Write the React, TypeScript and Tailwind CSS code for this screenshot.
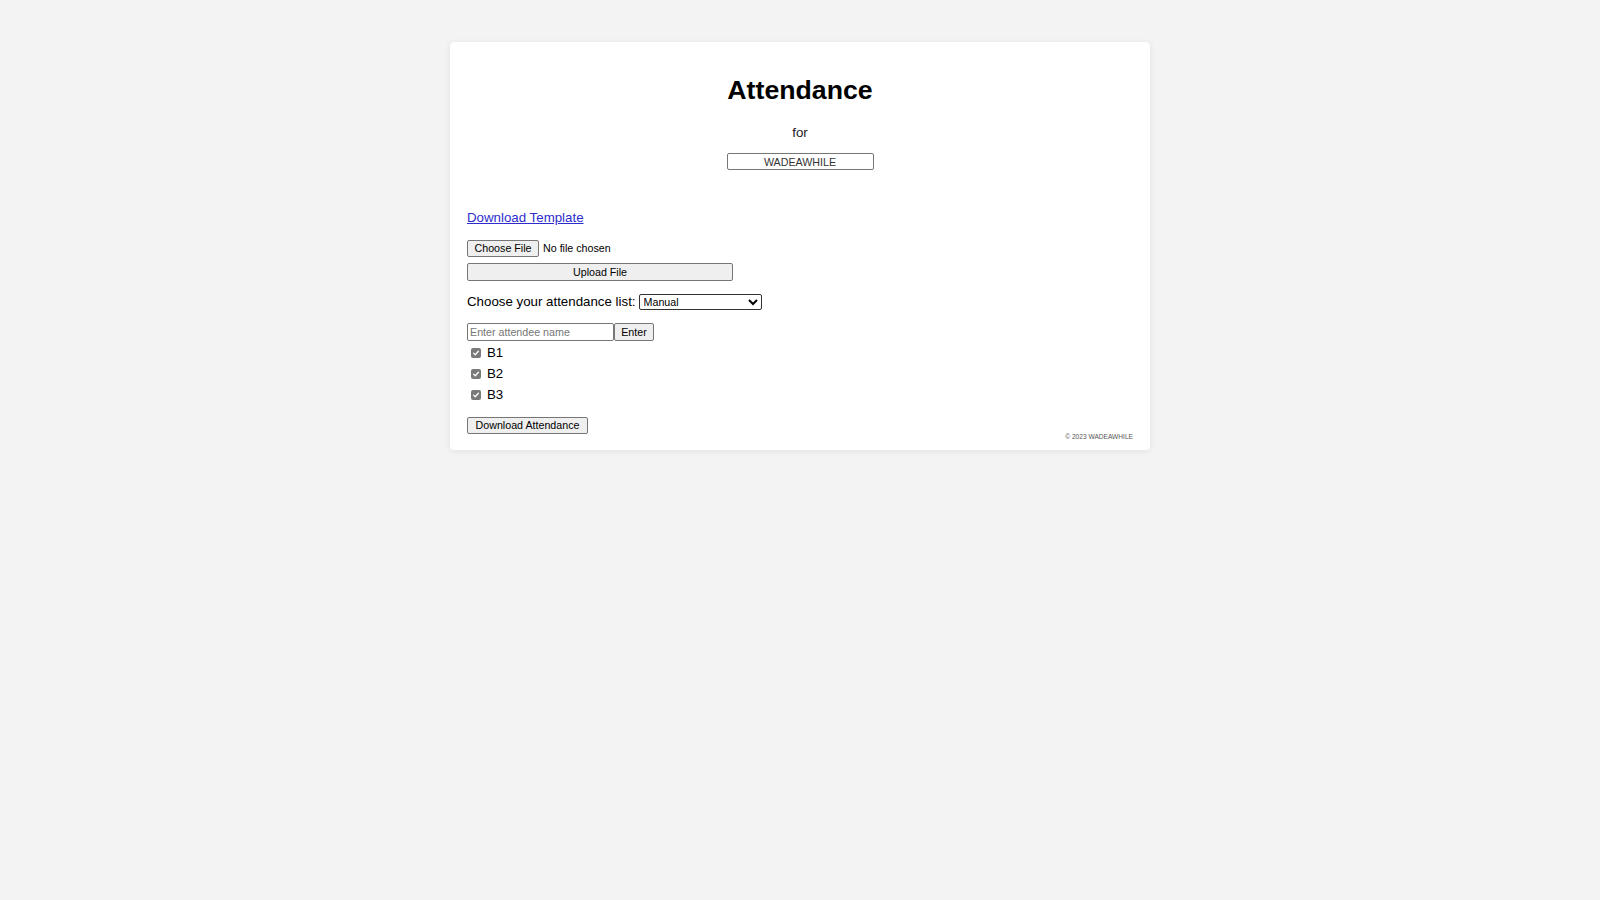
import React, { useState } from 'react';

const Check: React.FC = () => (
  <span className="flex h-[10px] w-[10px] items-center justify-center rounded-[2px] bg-[#7a7a7a]">
    <svg viewBox="0 0 10 10" className="h-[8px] w-[8px]">
      <path d="M2 5.2 L4.1 7.2 L8 2.8" fill="none" stroke="#fff" strokeWidth="1.6" strokeLinecap="round" strokeLinejoin="round" />
    </svg>
  </span>
);

const btn =
  'flex items-center justify-center rounded-[2px] border border-[#767676] bg-[#efefef] text-[10.7px] text-black leading-none';

const App: React.FC = () => {
  const [name, setName] = useState('');
  const attendees = ['B1', 'B2', 'B3'];

  return (
    <div className="min-h-screen bg-[#f3f3f3] pt-[42px] font-['Liberation_Sans',Arial,sans-serif] text-black">
      <div className="mx-auto w-[700px] rounded-[4px] bg-white px-[17px] pt-[17px] pb-[9px] shadow-[0_1px_6px_rgba(0,0,0,0.08)]">
        <h1 className="mt-[16px] text-center text-[26.7px] font-bold leading-[30px]">Attendance</h1>
        <p className="mt-[20px] text-center text-[13.3px] leading-[15px] text-[#222]">for</p>
        <div className="mt-[13px] flex justify-center">
          <input
            readOnly
            value="WADEAWHILE"
            className="h-[17px] w-[147px] rounded-[2px] border border-[#767676] bg-white text-center text-[10.7px] text-[#333] outline-none"
          />
        </div>

        <div className="mt-[40px] text-[13.3px] leading-[15px]">
          <a href="#" className="text-[#2d2dcc] underline">Download Template</a>
        </div>

        <div className="mt-[15px] flex h-[17px] items-center">
          <button className={`${btn} h-[17px] w-[72px]`}>Choose File</button>
          <span className="ml-[4px] text-[10.7px]">No file chosen</span>
        </div>
        <button className={`${btn} mt-[6px] h-[18px] w-[266px]`}>Upload File</button>

        <div className="mt-[12px] flex h-[17px] items-center gap-[3px] text-[13.3px]">
          <span>Choose your attendance list:</span>
          <select className="h-[16px] w-[123px] rounded-[2px] border border-[#333] bg-white text-[10.7px] leading-none outline-none">
            <option>Manual</option>
          </select>
        </div>

        <div className="mt-[13px] flex">
          <input
            value={name}
            onChange={e => setName(e.target.value)}
            placeholder="Enter attendee name"
            className="h-[18px] w-[147px] rounded-[2px] border border-[#767676] bg-white px-[2px] text-[10.7px] placeholder:text-[#767676] outline-none"
          />
          <button className={`${btn} h-[18px] w-[40px]`}>Enter</button>
        </div>

        <div className="mt-[1px]">
          {attendees.map(a => (
            <div key={a} className="flex h-[21px] items-center gap-[6px] pl-[4px] text-[13.3px]">
              <Check />
              <span>{a}</span>
            </div>
          ))}
        </div>

        <div className="mt-[12px] flex items-start justify-between">
          <button className={`${btn} h-[17px] w-[121px]`}>Download Attendance</button>
          <span className="mt-[16px] text-[6.6px] leading-[8px] text-[#555]">© 2023 WADEAWHILE</span>
        </div>
      </div>
    </div>
  );
};

export default App;
